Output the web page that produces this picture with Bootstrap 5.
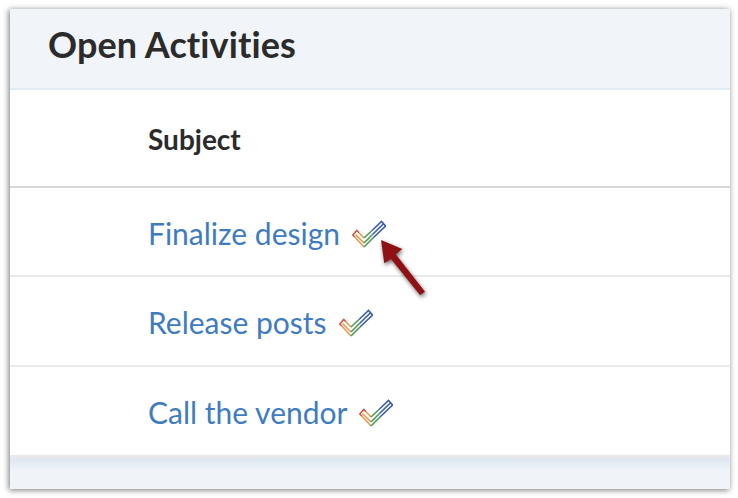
<!DOCTYPE html>
<html>
<head>
    <meta charset="UTF-8">
    <meta name="viewport" content="width=device-width, initial-scale=1.0">
    <title>Open Activities</title>
    <link href="https://cdn.jsdelivr.net/npm/bootstrap@5.3.0/dist/css/bootstrap.min.css" rel="stylesheet">
    <style>
        html, body { height: 100%; }
        body {
            background-color: #fff;
            padding: 9px 8px 9px 10px;
            font-family: Lato, "Liberation Sans", sans-serif;
            overflow: hidden;
        }
        .activity-panel {
            position: relative;
            height: 480px;
            background-color: #fff;
            box-shadow: -1px 1px 6px rgba(0, 0, 0, 0.55);
        }
        .panel-head {
            height: 81px;
            padding: 12px 0 0 38px;
            background-color: #f1f5f9;
            border-bottom: 2px solid #e1ebf3;
        }
        .panel-head h1 {
            margin: 0;
            font-size: 36px;
            line-height: 46px;
            font-weight: 700;
            color: #2b2b2b;
            letter-spacing: 0.1px;
        }
        .subject-row {
            height: 98px;
            padding: 32px 0 0 138px;
            border-bottom: 2px solid #d6d8da;
            font-size: 28px;
            line-height: 34px;
            font-weight: 700;
            color: #2b2b2b;
        }
        .activity-row {
            height: 90px;
            padding-left: 138px;
            padding-top: 26px;
            border-bottom: 2px solid #e8eaeb;
            font-size: 30px;
            line-height: 38px;
            color: #3f7cbf;
        }
        .activity-row:last-of-type { border-bottom: 0; }
        .done-check { width: 34px; height: 28px; margin-left: 12px; margin-top: 6px; }
        .panel-foot {
            height: 32px;
            background: linear-gradient(#e6e9ed, #dfe8f2 3px, #f0f4f9 14px);
        }
        .pointer-arrow {
            position: absolute;
            left: 352px;
            top: 213px;
            width: 66px;
            height: 76px;
            filter: drop-shadow(1px 2px 2px rgba(0, 0, 0, 0.6));
        }
    </style>
</head>
<body>

<svg width="0" height="0" class="position-absolute">
    <defs>
        <g id="rainbow-check" fill="none" stroke-width="1.6" stroke-linejoin="miter">
            <path d="M7 12.7 L4.8 10.5 L0.8 15 L3 17.3" stroke="#c9574a"/>
            <path d="M7 12.7 L12 18 M3 17.3 L12 27 M3.5 14.5 L12 23" stroke="#e79a4e"/>
            <path d="M12 18 L20 10.5 M12 27 L21 18 M12 23 L20.5 14.5" stroke="#4f9a57"/>
            <path d="M20 10.5 L29.5 1.5 L33.5 6 L21 18 M20.5 14.5 L31.5 3.7" stroke="#3b5ea8"/>
        </g>
    </defs>
</svg>

<div class="activity-panel d-flex flex-column">
    <div class="panel-head"><h1>Open Activities</h1></div>
    <div class="subject-row">Subject</div>
    <div class="activity-row d-flex align-items-start">
        <span>Finalize design</span>
        <svg class="done-check" viewBox="0 0 34 28"><use href="#rainbow-check"/></svg>
    </div>
    <div class="activity-row d-flex align-items-start">
        <span>Release posts</span>
        <svg class="done-check" viewBox="0 0 34 28"><use href="#rainbow-check"/></svg>
    </div>
    <div class="activity-row d-flex align-items-start">
        <span>Call the vendor</span>
        <svg class="done-check" viewBox="0 0 34 28"><use href="#rainbow-check"/></svg>
    </div>
    <div class="panel-foot mt-auto"></div>
    <svg class="pointer-arrow" viewBox="0 0 66 76">
        <path d="M19 18 L40.3 27 L33.7 32.3 L63 69.7 L58 73 L29 37 L22.3 41.3 Z" fill="#8f1114"/>
    </svg>
</div>

<script src="https://cdn.jsdelivr.net/npm/bootstrap@5.3.0/dist/js/bootstrap.bundle.min.js"></script>
</body>
</html>
